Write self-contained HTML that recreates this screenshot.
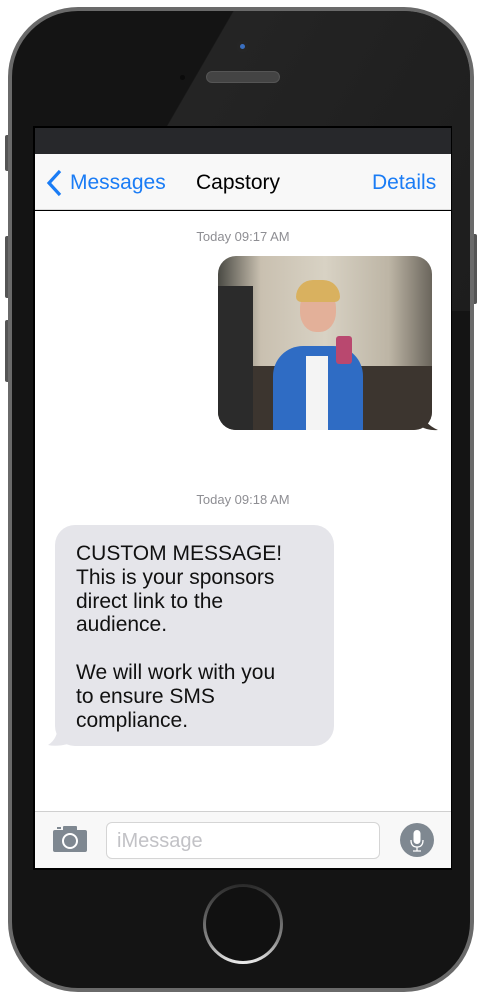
<!DOCTYPE html>
<html><head><style>
*{margin:0;padding:0;box-sizing:border-box}
body{width:481px;height:1000px;background:#fff;position:relative;overflow:hidden;font-family:"Liberation Sans",sans-serif}
.abs{position:absolute}
</style></head><body>
<div class="abs" style="left:5px;top:135px;width:5px;height:36px;background:#555;border-radius:2px"></div>
<div class="abs" style="left:5px;top:236px;width:5px;height:62px;background:#555;border-radius:2px"></div>
<div class="abs" style="left:5px;top:320px;width:5px;height:62px;background:#555;border-radius:2px"></div>
<div class="abs" style="left:472px;top:234px;width:5px;height:70px;background:#555;border-radius:2px"></div>
<div class="abs" style="left:8px;top:7px;width:466px;height:985px;border-radius:70px;background:#6a6a6a"></div>
<div class="abs" style="left:12px;top:11px;width:458px;height:977px;border-radius:66px;background:#141414"></div>
<div class="abs" style="left:12px;top:11px;width:458px;height:300px;border-radius:66px 66px 0 0;background:linear-gradient(120deg,transparent 35%,#262626 35.2%,#1e1e1e 100%);opacity:.9"></div>
<div class="abs" style="left:236px;top:40px;width:13px;height:13px;border-radius:50%;background:#252525"></div>
<div class="abs" style="left:240px;top:44px;width:5px;height:5px;border-radius:50%;background:#3a6fc0"></div>
<div class="abs" style="left:206px;top:71px;width:74px;height:12px;border-radius:6px;background:#444;border:1px solid #555"></div>
<div class="abs" style="left:180px;top:75px;width:5px;height:5px;border-radius:50%;background:#0b0b0b"></div>
<div class="abs" style="left:33px;top:126px;width:419px;height:744px;background:#000"></div>
<div class="abs" style="left:35px;top:128px;width:416px;height:26px;background:#27282b"></div>
<div class="abs" style="left:35px;top:154px;width:416px;height:56px;background:#f8f8f8;border-bottom:1px solid #dcdcdc"></div>
<svg class="abs" style="left:45px;top:169px" width="18" height="28"><path d="M15 2 L4 14 L15 26" stroke="#1a7cf5" stroke-width="3.2" fill="none"/></svg>
<div class="abs" style="left:70px;top:171px;font-size:21px;color:#1a7cf5">Messages</div>
<div class="abs" style="left:196px;top:171px;font-size:21px;color:#000">Capstory</div>
<div class="abs" style="left:372px;top:171px;font-size:21px;color:#1a7cf5">Details</div>
<div class="abs" style="left:35px;top:211px;width:416px;height:600px;background:#fff"></div>
<div class="abs" style="left:35px;top:229px;width:416px;text-align:center;font-size:13px;color:#8e8e93">Today 09:17 AM</div>
<div class="abs" style="left:218px;top:256px;width:214px;height:174px;border-radius:18px;overflow:hidden;background:linear-gradient(90deg,#4a4a44 0%,#c9c0b0 20%,#d8d2c4 50%,#bdb5a5 80%,#6a655c 100%)">
 <div class="abs" style="left:0;top:110px;width:214px;height:64px;background:#3c352f"></div>
 <div class="abs" style="left:0;top:30px;width:35px;height:144px;background:#2b2b2b"></div>
 <div class="abs" style="left:55px;top:90px;width:90px;height:84px;border-radius:30px 30px 0 0;background:#2f6cc4"></div>
 <div class="abs" style="left:88px;top:100px;width:22px;height:74px;background:#f4f4f4"></div>
 <div class="abs" style="left:82px;top:32px;width:36px;height:44px;border-radius:45%;background:#e3b099"></div>
 <div class="abs" style="left:78px;top:24px;width:44px;height:22px;border-radius:20px 20px 6px 6px;background:#d9b15f"></div>
 <div class="abs" style="left:118px;top:80px;width:16px;height:28px;background:#b9486f;border-radius:3px"></div>
</div>
<svg class="abs" style="left:420px;top:410px" width="20" height="22"><path d="M0 0 Q4 14 18 20 Q8 21 0 16Z" fill="#3c352f"/></svg>
<div class="abs" style="left:35px;top:492px;width:416px;text-align:center;font-size:13px;color:#8e8e93">Today 09:18 AM</div>
<div class="abs" style="left:55px;top:525px;width:279px;height:221px;border-radius:20px;background:#e5e5ea"></div>
<svg class="abs" style="left:46px;top:724px" width="24" height="24"><path d="M22 0 L22 20 Q10 23 2 21 Q12 15 12 0Z" fill="#e5e5ea"/></svg>
<div class="abs" style="left:76px;top:542px;font-size:21px;line-height:23.8px;color:#111">CUSTOM MESSAGE!<br>This is your sponsors<br>direct link to the<br>audience.<br><br>We will work with you<br>to ensure SMS<br>compliance.</div>
<div class="abs" style="left:35px;top:811px;width:416px;height:57px;background:#f8f8f8;border-top:1px solid #d0d0d0"></div>
<svg class="abs" style="left:53px;top:826px" width="35" height="26"><rect x="0" y="4" width="34" height="22" rx="2" fill="#7f8891"/><rect x="10" y="0" width="14" height="6" rx="1" fill="#7f8891"/><rect x="4" y="1" width="4" height="2" fill="#7f8891"/><circle cx="17" cy="15" r="7" fill="none" stroke="#fff" stroke-width="2"/></svg>
<div class="abs" style="left:106px;top:822px;width:274px;height:37px;border:1px solid #d5d5d5;border-radius:6px;background:#fff"></div>
<div class="abs" style="left:117px;top:830px;font-size:20px;color:#c2c2c6">iMessage</div>
<div class="abs" style="left:400px;top:823px;width:34px;height:34px;border-radius:50%;background:#7f8891"></div>
<svg class="abs" style="left:400px;top:823px" width="34" height="34"><rect x="13.5" y="7" width="7" height="14" rx="3.5" fill="#fff"/><path d="M11 17 Q11 24 17 24 Q23 24 23 17 M17 24 V28 M13 28 H21" stroke="#fff" stroke-width="1.3" fill="none"/></svg>
<div class="abs" style="left:203px;top:884px;width:80px;height:80px;border-radius:50%;background:linear-gradient(180deg,#2a2a2a,#888 70%,#eee);"></div>
<div class="abs" style="left:206px;top:887px;width:74px;height:74px;border-radius:50%;background:#111"></div>
</body></html>
